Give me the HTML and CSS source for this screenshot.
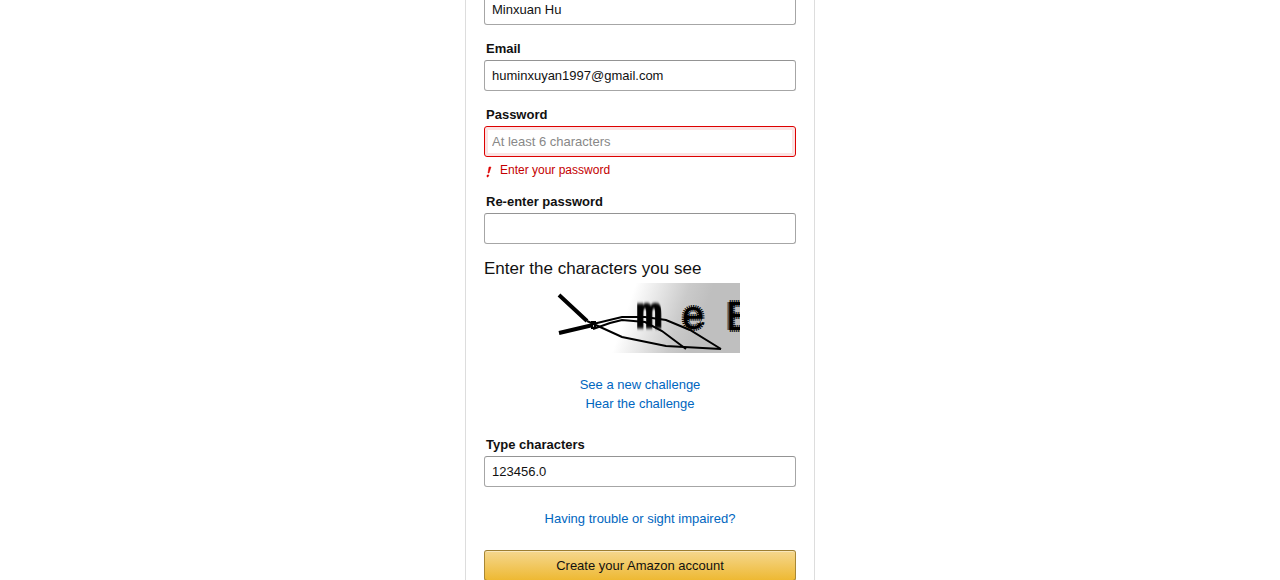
FILE: index.html
```html
<!DOCTYPE html>
<html lang="en">
<head>
<meta charset="utf-8">
<title>Create account</title>
<link rel="stylesheet" href="styles.css">
</head>
<body>
<form class="card">
  <input class="field" type="text" aria-label="Name" value="Minxuan Hu">

  <div class="group">
    <label class="label" for="email">Email</label>
    <input class="field" id="email" type="email" value="huminxuyan1997@gmail.com">
  </div>

  <div class="group">
    <label class="label" for="password">Password</label>
    <input class="field field-error" id="password" type="password" placeholder="At least 6 characters" aria-describedby="password-error">
    <div class="error" id="password-error">
      <svg class="error-icon" viewBox="0 0 8 16" aria-hidden="true">
        <path d="M3 5H5L3 11H2Z"/>
        <path d="M1 13H3L2 15H1Z"/>
      </svg>
      <span>Enter your password</span>
    </div>
  </div>

  <div class="group">
    <label class="label" for="password-check">Re-enter password</label>
    <input class="field" id="password-check" type="password">
  </div>

  <h4 class="heading">Enter the characters you see</h4>
  <svg class="captcha" viewBox="0 0 200 70" role="img" aria-label="Visual challenge">
    <defs>
      <linearGradient id="haze" gradientUnits="userSpaceOnUse" x1="84" y1="35" x2="154" y2="59">
        <stop offset="0" stop-color="#fff"/>
        <stop offset="0.3" stop-color="#e9e9e9"/>
        <stop offset="0.7" stop-color="#cacaca"/>
        <stop offset="1" stop-color="#bfbfbf"/>
      </linearGradient>
      <filter id="smear" x="-20%" y="-20%" width="140%" height="140%">
        <feGaussianBlur stdDeviation="0.3 1.6"/>
      </filter>
    </defs>
    <rect width="200" height="70" fill="url(#haze)"/>
    <g class="glyphs">
      <text class="smeared" x="96" y="45" filter="url(#smear)">m</text>
      <text class="rough" x="142" y="46">e</text>
      <text class="rough" x="186" y="47">B</text>
    </g>
    <g class="strokes">
      <path d="M53 41L82 34H105L126 37L150 47L181 66"/>
      <path d="M53 46L70 40L82 37L105 39L122 48L146 66"/>
      <path d="M47 38L82 54L126 63L181 66"/>
      <path d="M52 39H55V45H52Z"/>
      <path class="thick" d="M19 12L47 38M19 50L53 42"/>
    </g>
  </svg>

  <div class="links">
    <a class="link" href="#">See a new challenge</a>
    <a class="link" href="#">Hear the challenge</a>
  </div>

  <label class="label" for="guess">Type characters</label>
  <input class="field" id="guess" type="text" value="123456.0">

  <div class="links">
    <a class="link" href="#">Having trouble or sight impaired?</a>
  </div>

  <button class="submit" type="submit">Create your Amazon account</button>
</form>
</body>
</html>
```
FILE: styles.css
```css
* { box-sizing: border-box; }

body {
  margin: 0;
  height: 100vh;
  overflow: hidden;
  background: #fff;
  color: #111;
  font: 13px/19px "Liberation Sans", Arial, sans-serif;
}

.card {
  display: flex;
  flex-direction: column;
  max-width: 350px;
  margin: -6px auto 0;
  padding: 0 18px 18px;
  border: 1px solid #ddd;
  border-top: 0;
}

.group {
  display: flex;
  flex-direction: column;
  margin-top: 14px;
}

.label {
  padding: 0 2px 2px;
  font-weight: 700;
}

.field {
  width: 100%;
  height: 31px;
  padding: 3px 7px;
  border: 1px solid #a6a6a6;
  border-top-color: #949494;
  border-radius: 3px;
  background: #fff;
  color: #111;
  font: inherit;
  outline: 0;
}

.field::placeholder {
  color: #888;
  opacity: 1;
}

.field-error {
  border-color: #d00;
  box-shadow: inset 0 0 0 3px #fbe3e3;
}

.error {
  display: flex;
  gap: 6px;
  margin-top: 5px;
  padding-left: 2px;
  color: #c40000;
  font-size: 12px;
  line-height: 16px;
}

.error-icon {
  width: 8px;
  height: 16px;
  fill: #d00;
  stroke: #d00;
  stroke-width: 0.5;
}

.heading {
  margin: 14px 0 3px;
  font-size: 17px;
  font-weight: 400;
  line-height: 22px;
}

.captcha {
  align-self: center;
  width: 200px;
  height: 70px;
}

.glyphs { fill: #000; }

.smeared {
  font: 700 44px "DejaVu Sans Mono", monospace;
  stroke: #000;
  stroke-width: 1px;
}

.rough {
  font: 400 40px "Liberation Sans", Arial, sans-serif;
  stroke: #000;
  stroke-width: 4px;
  stroke-dasharray: 1 1;
}

.strokes {
  fill: none;
  stroke: #000;
  stroke-width: 2px;
}

.thick { stroke-width: 4px; }

.links {
  display: flex;
  flex-direction: column;
  align-items: center;
  margin: 22px 0;
}

.link {
  color: #0066c0;
  text-decoration: none;
}

.submit {
  height: 31px;
  padding: 0 10px;
  border: 1px solid #a88734;
  border-color: #9c7e31 #a88734 #846a29;
  border-radius: 3px;
  background: linear-gradient(#f5d78e, #eeb933);
  box-shadow: inset 0 1px 0 rgba(255, 255, 255, 0.4);
  color: #111;
  font: inherit;
}
```
